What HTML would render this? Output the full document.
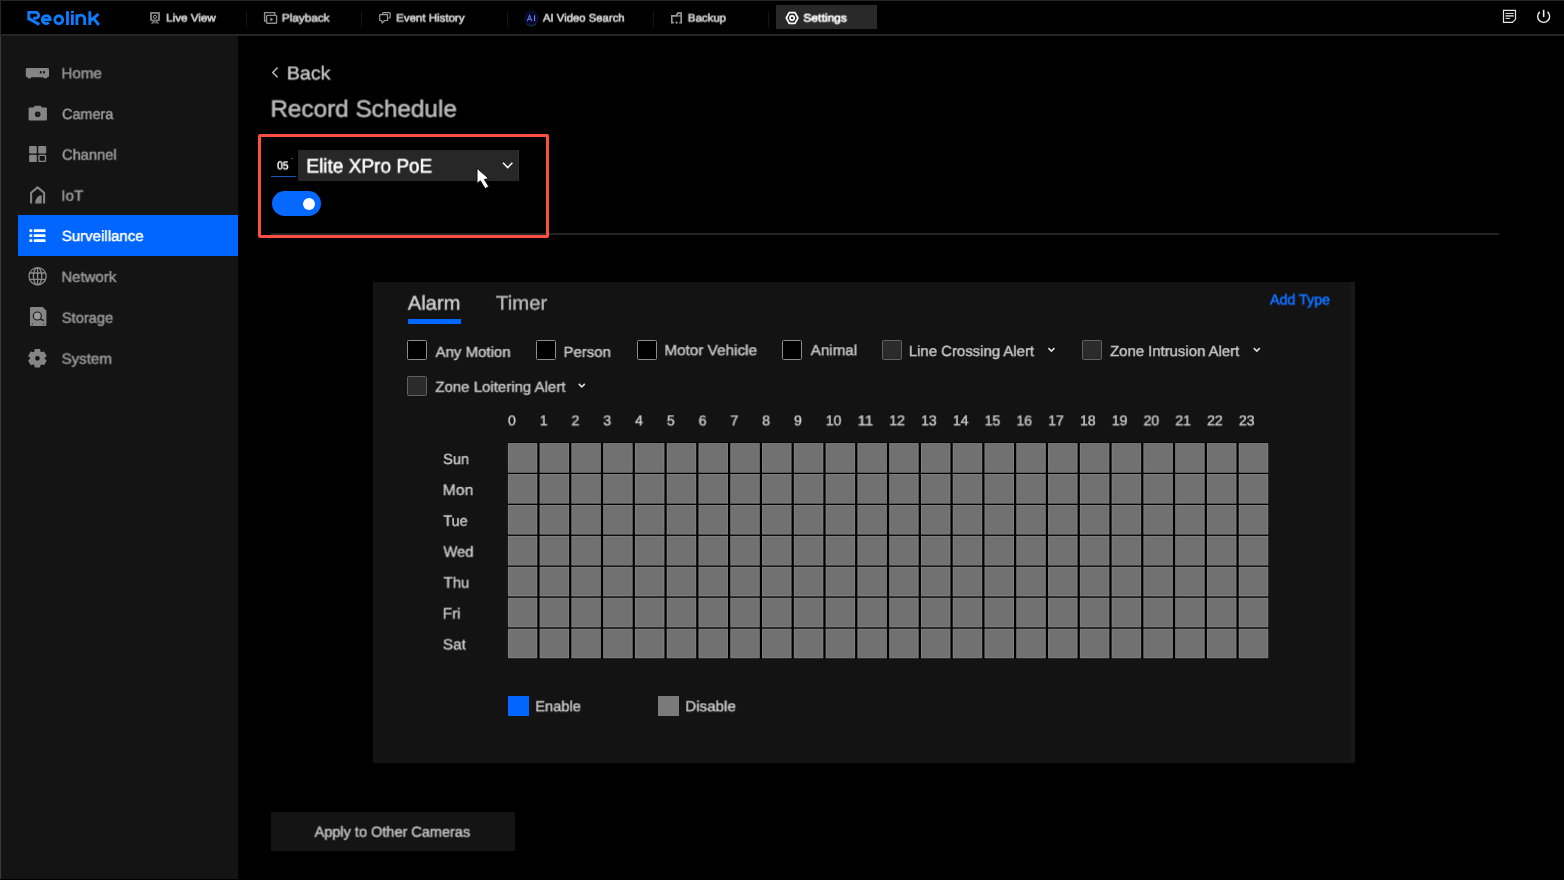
<!DOCTYPE html>
<html>
<head>
<meta charset="utf-8">
<title>Record Schedule</title>
<style>
*{box-sizing:border-box;margin:0;padding:0}
html,body{width:1564px;height:881px;overflow:hidden;background:#000}
body{font-family:"Liberation Sans",sans-serif;color:#c4c4c4;position:relative}
.abs{position:absolute}
.t{position:absolute;left:0;top:0;white-space:nowrap;line-height:1;transform-origin:0 0;will-change:transform;text-rendering:geometricPrecision}
svg{position:absolute;overflow:visible}
/* frame */
#topline{left:0;top:0;width:1564px;height:1px;background:#262626}
#leftline{left:0;top:0;width:1px;height:36px;background:#272727}
#leftline2{left:0;top:36px;width:1.1px;height:843px;background:#3a3a3a}
#botblack{left:0;top:878.8px;width:1564px;height:1px;background:#000}
#botwhite{left:0;top:879.7px;width:1564px;height:1.3px;background:#fff}
#hdrline{left:0;top:34px;width:1564px;height:2px;background:#262626}
#sidebar{left:1px;top:36px;width:237px;height:845px;background:#141414}
.sep{position:absolute;top:11px;width:1px;height:16px;background:#161616}
#active{left:18px;top:215px;width:220px;height:41px;background:#0066ff}
#panel{left:373.2px;top:282.2px;width:982.1px;height:480.9px;background:#131313}
.cb{position:absolute;width:20px;height:20px;border:1.2px solid #8c8c8c;border-radius:1.5px;background:#000}
.cb.d{border-color:#606060;background:#2b2b2b}
</style>
</head>
<body>
<div class="abs" id="sidebar"></div>
<div class="abs" id="topline"></div>
<div class="abs" id="leftline"></div>
<div class="abs" id="leftline2"></div>
<div class="abs" id="botblack"></div>
<div class="abs" id="botwhite"></div>
<div class="abs" id="hdrline"></div>

<!-- top navigation -->
<div class="sep" style="left:246px"></div>
<div class="sep" style="left:361px"></div>
<div class="sep" style="left:507px"></div>
<div class="sep" style="left:653px"></div>
<div class="sep" style="left:768px"></div>
<div class="abs" style="left:776px;top:5px;width:101px;height:24px;background:#292929"></div>
<svg style="left:0;top:0" width="1564" height="36" viewBox="0 0 1564 36">
 <!-- logo -->
 <g fill="none" stroke="#0d7cff" stroke-width="2.85" stroke-linejoin="miter">
  <path d="M28.8 19.6V12.3H35.7a2.95 2.95 0 0 1 0 5.9H33.2"/>
  <path d="M27.9 18.2L39.3 24.5" stroke-width="3.1"/>
  <path d="M42.6 19.6H50.2a3.95 3.95 0 1 0 -1.3 2.95"/>
  <circle cx="58.8" cy="19.7" r="3.95"/>
  <path d="M67.5 11.2V25"/>
  <path d="M72.4 14.2V25M72.4 10.9V12.9"/>
  <path d="M76.9 25V14.2M76.9 19a3.9 3.9 0 0 1 7.8 0V25"/>
  <path d="M89.8 11.2V25M98.4 14.2L90.4 20.6M93.6 18.4L98.8 25"/>
 </g>
 <!-- live view -->
 <g>
  <rect x="150" y="12.1" width="10" height="9" rx="1" fill="#7e7e7e"/>
  <rect x="152.1" y="13.9" width="5.8" height="5.7" fill="#000"/>
  <circle cx="155" cy="16.9" r="1.55" fill="none" stroke="#a0a0a0" stroke-width="1"/>
  <path d="M153.4 21L151.6 23.6H158.4L156.6 21Z" fill="#555"/>
  <path d="M153.4 21L151.6 23.6M156.6 21L158.4 23.6" fill="none" stroke="#858585" stroke-width="1.1"/>
 </g>
 <!-- playback -->
 <g fill="none" stroke="#8e8e8e" stroke-width="1.4">
  <path d="M266.6 21H264.6V12.6H274.7V14.8"/>
  <rect x="266.6" y="15.4" width="10" height="7.9" rx="0.8"/>
  <path d="M270.4 17.4L273.2 19.4L270.4 21.3Z" fill="#a0a0a0" stroke="none"/>
 </g>
 <!-- event history -->
 <g fill="none" stroke="#9a9a9a" stroke-width="1.2" stroke-linejoin="round">
  <path d="M382.6 14V13.6a1 1 0 0 1 1-1H389.2a1 1 0 0 1 1 1V17a1 1 0 0 1 -1 1H388.2"/>
  <path d="M379.7 14.6H387.5V20.5H384.6L382.2 23.2L381.6 20.5H379.7Z"/>
 </g>
 <!-- AI -->
 <circle cx="531.4" cy="18.2" r="6.7" fill="#06062a" stroke="#0f1642" stroke-width="1"/>
 <path d="M526.6 24a6.9 6.9 0 0 0 9.6 0" fill="none" stroke="#153a4e" stroke-width="1"/>
 <g fill="none" stroke="#5c6ed6" stroke-width="1.15">
  <path d="M527.2 21.2L529.6 15.2L532 21.2M528 19.4H531.2"/>
  <path d="M534.6 15.2V21.2" stroke="#6d88ea"/>
 </g>
 <!-- backup -->
 <g fill="none" stroke="#999" stroke-width="1.6">
  <path d="M673.8 22.6H671.8V15.9H676.4L677.8 13.1H681.2V22.6H679.4"/>
  <path d="M676.4 15.9H681.2" stroke-width="1.2"/>
  <rect x="675.6" y="21.7" width="1.8" height="1.8" fill="#bbb" stroke="none"/>
 </g>
 <!-- settings -->
 <g fill="none" stroke="#fff" stroke-width="1.7" stroke-linejoin="round">
  <path d="M786.3 18L789.2 12.7H795L797.9 18L795 23.3H789.2Z"/>
  <circle cx="792.1" cy="18" r="2.1"/>
 </g>
 <!-- note icon -->
 <g fill="none" stroke="#e6e6e6" stroke-width="1.1">
  <path d="M1503.5 10.35H1515.5V19.3L1512.4 22.4H1503.5Z" stroke-width="1.2"/>
  <path d="M1505.4 13.4H1513.8M1505.4 18.4H1510" stroke-width="1"/><path d="M1505.4 15.9H1513.8" stroke-width="1.5" stroke="#cfcfcf"/>
 </g>
 <!-- power -->
 <g fill="none" stroke="#f0f0f0" stroke-width="1.4">
  <path d="M1539.75 11.85a6 6 0 1 0 7.8 0"/>
  <path d="M1543.65 9.9V17" stroke-width="1.6"/>
 </g>
</svg>

<!-- sidebar -->
<div class="abs" id="active"></div>
<svg style="left:0;top:36px" width="240" height="360" viewBox="0 36 240 360">
 <g fill="#858585">
  <!-- home / nvr -->
  <rect x="25.8" y="68.1" width="23.2" height="9.1" rx="1.4"/>
  <rect x="27.6" y="76.8" width="3.4" height="1.5"/><rect x="43.6" y="76.8" width="3.4" height="1.5"/>
  <rect x="39.8" y="71.1" width="1.9" height="2.3" fill="#141414"/><rect x="43" y="71.1" width="1.9" height="2.3" fill="#141414"/>
  <!-- camera -->
  <path d="M29.6 107.5H33.4L34.8 105.8H40.6L42 107.5H45.9a1 1 0 0 1 1 1V119.6a1 1 0 0 1 -1 1H29.6a1 1 0 0 1 -1-1V108.5a1 1 0 0 1 1-1Z"/>
  <circle cx="37.7" cy="114.3" r="2.8" fill="#161616"/>
  <circle cx="37.7" cy="114.3" r="1.2" fill="#2c2c2c"/>
  <!-- channel -->
  <rect x="29.1" y="146" width="7.7" height="7.4" rx="1.2"/>
  <rect x="38.2" y="146" width="8" height="7.4" rx="1.2"/>
  <rect x="29.1" y="154.7" width="7.7" height="7.4" rx="1.2"/>
  <rect x="38.9" y="155.4" width="6.6" height="6" rx="0.8" fill="none" stroke="#8a8a8a" stroke-width="1.4"/>
  <!-- iot -->
  <path d="M31.1 203.6V192.8L37.6 187.4L44.1 192.8V203.6" fill="none" stroke="#858585" stroke-width="2.1" stroke-linejoin="round"/>
  <path d="M35 203.6A6.7 8.4 0 0 1 41.7 195.2V203.6Z"/>
  <!-- storage -->
  <path d="M31.2 307H42.6L46.4 310.6V324.9a1.2 1.2 0 0 1 -1.2 1.2H31.2a1.2 1.2 0 0 1 -1.2-1.2V308.2a1.2 1.2 0 0 1 1.2-1.2Z"/>
  <circle cx="37.3" cy="316" r="4" fill="#999" stroke="#1c1c1c" stroke-width="1.2"/>
  <path d="M40.4 319L43.8 320.6" stroke="#1c1c1c" stroke-width="1.4" fill="none"/>
  <rect x="31.9" y="323.4" width="1" height="1.4" fill="#333"/><rect x="43.4" y="323.4" width="1" height="1.4" fill="#333"/>
  <!-- system gear -->
  <path d="M35.07 352.12L35.36 349.95L39.44 349.95L39.73 352.12L41.59 353.20L43.61 352.35L45.66 355.89L43.91 357.23L43.91 359.37L45.66 360.71L43.61 364.25L41.59 363.40L39.73 364.48L39.44 366.65L35.36 366.65L35.07 364.48L33.21 363.40L31.19 364.25L29.14 360.71L30.89 359.37L30.89 357.23L29.14 355.89L31.19 352.35L33.21 353.20ZM40.60 358.30a3.2 3.2 0 1 0 -6.4 0a3.2 3.2 0 1 0 6.4 0Z" fill-rule="evenodd" stroke="#858585" stroke-width="1.7" stroke-linejoin="round"/>
 </g>
 <!-- surveillance -->
 <g fill="#fff">
  <rect x="29.4" y="229.3" width="3" height="2.7" rx="1"/><rect x="33.8" y="229.3" width="11.7" height="2.7" rx="0.6"/>
  <rect x="29.4" y="234.3" width="3" height="2.7" rx="1"/><rect x="33.8" y="234.3" width="11.7" height="2.7" rx="0.6"/>
  <rect x="29.4" y="239.3" width="3" height="2.7" rx="1"/><rect x="33.8" y="239.3" width="11.7" height="2.7" rx="0.6"/>
 </g>
 <!-- network -->
 <g fill="none" stroke="#8a8a8a" stroke-width="1.3">
  <circle cx="37.6" cy="276.2" r="8.6"/>
  <ellipse cx="37.6" cy="276.2" rx="4.2" ry="8.6"/>
  <path d="M37.6 267.6V284.8M29.8 273H45.4M29.8 279.4H45.4"/>
 </g>
</svg>

<!-- header: back, title, camera select, toggle -->
<div class="abs" style="left:271px;top:233px;width:1228px;height:2px;background:#232323"></div>
<div class="abs" style="left:298px;top:150px;width:221px;height:31px;background:#272727"></div>
<div class="abs" style="left:517.8px;top:150px;width:1.2px;height:31px;background:#323232"></div>
<div class="abs" style="left:271.4px;top:175.9px;width:24.5px;height:0.9px;background:#1857b4"></div>
<div class="abs" style="left:290.8px;top:157.5px;width:2px;height:1px;background:#184f9c"></div>
<div class="abs" style="left:272px;top:191px;width:49px;height:25px;border-radius:12.5px;background:#0568ff"></div>
<div class="abs" style="left:302.8px;top:197.9px;width:12px;height:12px;border-radius:50%;background:#fff"></div>
<div class="abs" style="left:258px;top:133.9px;width:291.1px;height:104.2px;border:3.1px solid #fb4f42;border-radius:2px"></div>
<svg style="left:0;top:36px" width="600" height="210" viewBox="0 36 600 210">
 <path d="M277.6 67.5L272.7 72.4L277.6 77.3" fill="none" stroke="#c2c2c2" stroke-width="1.35"/>
 <path d="M503 162.8L507.7 167.6L512.4 162.8" fill="none" stroke="#fff" stroke-width="1.5"/>
 <!-- mouse cursor -->
 <path d="M477 168.2V183.4L480.3 180.8L485.2 188.7L488.8 186.5L484.4 179.5L488.8 178.6Z" fill="#fff" stroke="#0c0c0c" stroke-width="1" stroke-linejoin="round"/>
</svg>

<!-- schedule panel -->
<div class="abs" id="panel"></div>
<div class="abs" style="left:1349.8px;top:282.2px;width:5.5px;height:480.9px;background:#171717"></div>
<div class="abs" style="left:407.5px;top:318.8px;width:53.5px;height:5.6px;background:#0068ff"></div>
<div class="cb" style="left:407.2px;top:340.4px"></div>
<div class="cb" style="left:536.2px;top:340.4px"></div>
<div class="cb" style="left:637px;top:340.4px"></div>
<div class="cb" style="left:782.2px;top:340.4px"></div>
<div class="cb d" style="left:881.6px;top:340.4px"></div>
<div class="cb d" style="left:1082px;top:340.4px"></div>
<div class="cb d" style="left:407.2px;top:376.2px"></div>
<svg style="left:373px;top:282px" width="982" height="481" viewBox="373 282 982 481">
 <g fill="none" stroke="#e0e0e0" stroke-width="1.5">
  <path d="M1048.4 348.1L1051.4 351.1L1054.4 348.1"/>
  <path d="M1253.8 348.1L1256.8 351.1L1259.8 348.1"/>
  <path d="M578.8 383.9L581.8 386.9L584.8 383.9"/>
 </g>
</svg>
<svg style="left:0;top:0" width="1564" height="881" viewBox="0 0 1564 881"><rect x="507.1" y="442.4" width="761.1" height="216.2" fill="#000"/><rect x="507.80" y="443.10" width="29.5" height="29.6" fill="#818181"/><rect x="508.80" y="444.10" width="27.5" height="27.6" fill="#717171"/><rect x="539.58" y="443.10" width="29.5" height="29.6" fill="#818181"/><rect x="540.58" y="444.10" width="27.5" height="27.6" fill="#717171"/><rect x="571.36" y="443.10" width="29.5" height="29.6" fill="#818181"/><rect x="572.36" y="444.10" width="27.5" height="27.6" fill="#717171"/><rect x="603.14" y="443.10" width="29.5" height="29.6" fill="#818181"/><rect x="604.14" y="444.10" width="27.5" height="27.6" fill="#717171"/><rect x="634.92" y="443.10" width="29.5" height="29.6" fill="#818181"/><rect x="635.92" y="444.10" width="27.5" height="27.6" fill="#717171"/><rect x="666.70" y="443.10" width="29.5" height="29.6" fill="#818181"/><rect x="667.70" y="444.10" width="27.5" height="27.6" fill="#717171"/><rect x="698.48" y="443.10" width="29.5" height="29.6" fill="#818181"/><rect x="699.48" y="444.10" width="27.5" height="27.6" fill="#717171"/><rect x="730.26" y="443.10" width="29.5" height="29.6" fill="#818181"/><rect x="731.26" y="444.10" width="27.5" height="27.6" fill="#717171"/><rect x="762.04" y="443.10" width="29.5" height="29.6" fill="#818181"/><rect x="763.04" y="444.10" width="27.5" height="27.6" fill="#717171"/><rect x="793.82" y="443.10" width="29.5" height="29.6" fill="#818181"/><rect x="794.82" y="444.10" width="27.5" height="27.6" fill="#717171"/><rect x="825.60" y="443.10" width="29.5" height="29.6" fill="#818181"/><rect x="826.60" y="444.10" width="27.5" height="27.6" fill="#717171"/><rect x="857.38" y="443.10" width="29.5" height="29.6" fill="#818181"/><rect x="858.38" y="444.10" width="27.5" height="27.6" fill="#717171"/><rect x="889.16" y="443.10" width="29.5" height="29.6" fill="#818181"/><rect x="890.16" y="444.10" width="27.5" height="27.6" fill="#717171"/><rect x="920.94" y="443.10" width="29.5" height="29.6" fill="#818181"/><rect x="921.94" y="444.10" width="27.5" height="27.6" fill="#717171"/><rect x="952.72" y="443.10" width="29.5" height="29.6" fill="#818181"/><rect x="953.72" y="444.10" width="27.5" height="27.6" fill="#717171"/><rect x="984.50" y="443.10" width="29.5" height="29.6" fill="#818181"/><rect x="985.50" y="444.10" width="27.5" height="27.6" fill="#717171"/><rect x="1016.28" y="443.10" width="29.5" height="29.6" fill="#818181"/><rect x="1017.28" y="444.10" width="27.5" height="27.6" fill="#717171"/><rect x="1048.06" y="443.10" width="29.5" height="29.6" fill="#818181"/><rect x="1049.06" y="444.10" width="27.5" height="27.6" fill="#717171"/><rect x="1079.84" y="443.10" width="29.5" height="29.6" fill="#818181"/><rect x="1080.84" y="444.10" width="27.5" height="27.6" fill="#717171"/><rect x="1111.62" y="443.10" width="29.5" height="29.6" fill="#818181"/><rect x="1112.62" y="444.10" width="27.5" height="27.6" fill="#717171"/><rect x="1143.40" y="443.10" width="29.5" height="29.6" fill="#818181"/><rect x="1144.40" y="444.10" width="27.5" height="27.6" fill="#717171"/><rect x="1175.18" y="443.10" width="29.5" height="29.6" fill="#818181"/><rect x="1176.18" y="444.10" width="27.5" height="27.6" fill="#717171"/><rect x="1206.96" y="443.10" width="29.5" height="29.6" fill="#818181"/><rect x="1207.96" y="444.10" width="27.5" height="27.6" fill="#717171"/><rect x="1238.74" y="443.10" width="29.5" height="29.6" fill="#818181"/><rect x="1239.74" y="444.10" width="27.5" height="27.6" fill="#717171"/><rect x="507.80" y="474.03" width="29.5" height="29.6" fill="#818181"/><rect x="508.80" y="475.03" width="27.5" height="27.6" fill="#717171"/><rect x="539.58" y="474.03" width="29.5" height="29.6" fill="#818181"/><rect x="540.58" y="475.03" width="27.5" height="27.6" fill="#717171"/><rect x="571.36" y="474.03" width="29.5" height="29.6" fill="#818181"/><rect x="572.36" y="475.03" width="27.5" height="27.6" fill="#717171"/><rect x="603.14" y="474.03" width="29.5" height="29.6" fill="#818181"/><rect x="604.14" y="475.03" width="27.5" height="27.6" fill="#717171"/><rect x="634.92" y="474.03" width="29.5" height="29.6" fill="#818181"/><rect x="635.92" y="475.03" width="27.5" height="27.6" fill="#717171"/><rect x="666.70" y="474.03" width="29.5" height="29.6" fill="#818181"/><rect x="667.70" y="475.03" width="27.5" height="27.6" fill="#717171"/><rect x="698.48" y="474.03" width="29.5" height="29.6" fill="#818181"/><rect x="699.48" y="475.03" width="27.5" height="27.6" fill="#717171"/><rect x="730.26" y="474.03" width="29.5" height="29.6" fill="#818181"/><rect x="731.26" y="475.03" width="27.5" height="27.6" fill="#717171"/><rect x="762.04" y="474.03" width="29.5" height="29.6" fill="#818181"/><rect x="763.04" y="475.03" width="27.5" height="27.6" fill="#717171"/><rect x="793.82" y="474.03" width="29.5" height="29.6" fill="#818181"/><rect x="794.82" y="475.03" width="27.5" height="27.6" fill="#717171"/><rect x="825.60" y="474.03" width="29.5" height="29.6" fill="#818181"/><rect x="826.60" y="475.03" width="27.5" height="27.6" fill="#717171"/><rect x="857.38" y="474.03" width="29.5" height="29.6" fill="#818181"/><rect x="858.38" y="475.03" width="27.5" height="27.6" fill="#717171"/><rect x="889.16" y="474.03" width="29.5" height="29.6" fill="#818181"/><rect x="890.16" y="475.03" width="27.5" height="27.6" fill="#717171"/><rect x="920.94" y="474.03" width="29.5" height="29.6" fill="#818181"/><rect x="921.94" y="475.03" width="27.5" height="27.6" fill="#717171"/><rect x="952.72" y="474.03" width="29.5" height="29.6" fill="#818181"/><rect x="953.72" y="475.03" width="27.5" height="27.6" fill="#717171"/><rect x="984.50" y="474.03" width="29.5" height="29.6" fill="#818181"/><rect x="985.50" y="475.03" width="27.5" height="27.6" fill="#717171"/><rect x="1016.28" y="474.03" width="29.5" height="29.6" fill="#818181"/><rect x="1017.28" y="475.03" width="27.5" height="27.6" fill="#717171"/><rect x="1048.06" y="474.03" width="29.5" height="29.6" fill="#818181"/><rect x="1049.06" y="475.03" width="27.5" height="27.6" fill="#717171"/><rect x="1079.84" y="474.03" width="29.5" height="29.6" fill="#818181"/><rect x="1080.84" y="475.03" width="27.5" height="27.6" fill="#717171"/><rect x="1111.62" y="474.03" width="29.5" height="29.6" fill="#818181"/><rect x="1112.62" y="475.03" width="27.5" height="27.6" fill="#717171"/><rect x="1143.40" y="474.03" width="29.5" height="29.6" fill="#818181"/><rect x="1144.40" y="475.03" width="27.5" height="27.6" fill="#717171"/><rect x="1175.18" y="474.03" width="29.5" height="29.6" fill="#818181"/><rect x="1176.18" y="475.03" width="27.5" height="27.6" fill="#717171"/><rect x="1206.96" y="474.03" width="29.5" height="29.6" fill="#818181"/><rect x="1207.96" y="475.03" width="27.5" height="27.6" fill="#717171"/><rect x="1238.74" y="474.03" width="29.5" height="29.6" fill="#818181"/><rect x="1239.74" y="475.03" width="27.5" height="27.6" fill="#717171"/><rect x="507.80" y="504.96" width="29.5" height="29.6" fill="#818181"/><rect x="508.80" y="505.96" width="27.5" height="27.6" fill="#717171"/><rect x="539.58" y="504.96" width="29.5" height="29.6" fill="#818181"/><rect x="540.58" y="505.96" width="27.5" height="27.6" fill="#717171"/><rect x="571.36" y="504.96" width="29.5" height="29.6" fill="#818181"/><rect x="572.36" y="505.96" width="27.5" height="27.6" fill="#717171"/><rect x="603.14" y="504.96" width="29.5" height="29.6" fill="#818181"/><rect x="604.14" y="505.96" width="27.5" height="27.6" fill="#717171"/><rect x="634.92" y="504.96" width="29.5" height="29.6" fill="#818181"/><rect x="635.92" y="505.96" width="27.5" height="27.6" fill="#717171"/><rect x="666.70" y="504.96" width="29.5" height="29.6" fill="#818181"/><rect x="667.70" y="505.96" width="27.5" height="27.6" fill="#717171"/><rect x="698.48" y="504.96" width="29.5" height="29.6" fill="#818181"/><rect x="699.48" y="505.96" width="27.5" height="27.6" fill="#717171"/><rect x="730.26" y="504.96" width="29.5" height="29.6" fill="#818181"/><rect x="731.26" y="505.96" width="27.5" height="27.6" fill="#717171"/><rect x="762.04" y="504.96" width="29.5" height="29.6" fill="#818181"/><rect x="763.04" y="505.96" width="27.5" height="27.6" fill="#717171"/><rect x="793.82" y="504.96" width="29.5" height="29.6" fill="#818181"/><rect x="794.82" y="505.96" width="27.5" height="27.6" fill="#717171"/><rect x="825.60" y="504.96" width="29.5" height="29.6" fill="#818181"/><rect x="826.60" y="505.96" width="27.5" height="27.6" fill="#717171"/><rect x="857.38" y="504.96" width="29.5" height="29.6" fill="#818181"/><rect x="858.38" y="505.96" width="27.5" height="27.6" fill="#717171"/><rect x="889.16" y="504.96" width="29.5" height="29.6" fill="#818181"/><rect x="890.16" y="505.96" width="27.5" height="27.6" fill="#717171"/><rect x="920.94" y="504.96" width="29.5" height="29.6" fill="#818181"/><rect x="921.94" y="505.96" width="27.5" height="27.6" fill="#717171"/><rect x="952.72" y="504.96" width="29.5" height="29.6" fill="#818181"/><rect x="953.72" y="505.96" width="27.5" height="27.6" fill="#717171"/><rect x="984.50" y="504.96" width="29.5" height="29.6" fill="#818181"/><rect x="985.50" y="505.96" width="27.5" height="27.6" fill="#717171"/><rect x="1016.28" y="504.96" width="29.5" height="29.6" fill="#818181"/><rect x="1017.28" y="505.96" width="27.5" height="27.6" fill="#717171"/><rect x="1048.06" y="504.96" width="29.5" height="29.6" fill="#818181"/><rect x="1049.06" y="505.96" width="27.5" height="27.6" fill="#717171"/><rect x="1079.84" y="504.96" width="29.5" height="29.6" fill="#818181"/><rect x="1080.84" y="505.96" width="27.5" height="27.6" fill="#717171"/><rect x="1111.62" y="504.96" width="29.5" height="29.6" fill="#818181"/><rect x="1112.62" y="505.96" width="27.5" height="27.6" fill="#717171"/><rect x="1143.40" y="504.96" width="29.5" height="29.6" fill="#818181"/><rect x="1144.40" y="505.96" width="27.5" height="27.6" fill="#717171"/><rect x="1175.18" y="504.96" width="29.5" height="29.6" fill="#818181"/><rect x="1176.18" y="505.96" width="27.5" height="27.6" fill="#717171"/><rect x="1206.96" y="504.96" width="29.5" height="29.6" fill="#818181"/><rect x="1207.96" y="505.96" width="27.5" height="27.6" fill="#717171"/><rect x="1238.74" y="504.96" width="29.5" height="29.6" fill="#818181"/><rect x="1239.74" y="505.96" width="27.5" height="27.6" fill="#717171"/><rect x="507.80" y="535.89" width="29.5" height="29.6" fill="#818181"/><rect x="508.80" y="536.89" width="27.5" height="27.6" fill="#717171"/><rect x="539.58" y="535.89" width="29.5" height="29.6" fill="#818181"/><rect x="540.58" y="536.89" width="27.5" height="27.6" fill="#717171"/><rect x="571.36" y="535.89" width="29.5" height="29.6" fill="#818181"/><rect x="572.36" y="536.89" width="27.5" height="27.6" fill="#717171"/><rect x="603.14" y="535.89" width="29.5" height="29.6" fill="#818181"/><rect x="604.14" y="536.89" width="27.5" height="27.6" fill="#717171"/><rect x="634.92" y="535.89" width="29.5" height="29.6" fill="#818181"/><rect x="635.92" y="536.89" width="27.5" height="27.6" fill="#717171"/><rect x="666.70" y="535.89" width="29.5" height="29.6" fill="#818181"/><rect x="667.70" y="536.89" width="27.5" height="27.6" fill="#717171"/><rect x="698.48" y="535.89" width="29.5" height="29.6" fill="#818181"/><rect x="699.48" y="536.89" width="27.5" height="27.6" fill="#717171"/><rect x="730.26" y="535.89" width="29.5" height="29.6" fill="#818181"/><rect x="731.26" y="536.89" width="27.5" height="27.6" fill="#717171"/><rect x="762.04" y="535.89" width="29.5" height="29.6" fill="#818181"/><rect x="763.04" y="536.89" width="27.5" height="27.6" fill="#717171"/><rect x="793.82" y="535.89" width="29.5" height="29.6" fill="#818181"/><rect x="794.82" y="536.89" width="27.5" height="27.6" fill="#717171"/><rect x="825.60" y="535.89" width="29.5" height="29.6" fill="#818181"/><rect x="826.60" y="536.89" width="27.5" height="27.6" fill="#717171"/><rect x="857.38" y="535.89" width="29.5" height="29.6" fill="#818181"/><rect x="858.38" y="536.89" width="27.5" height="27.6" fill="#717171"/><rect x="889.16" y="535.89" width="29.5" height="29.6" fill="#818181"/><rect x="890.16" y="536.89" width="27.5" height="27.6" fill="#717171"/><rect x="920.94" y="535.89" width="29.5" height="29.6" fill="#818181"/><rect x="921.94" y="536.89" width="27.5" height="27.6" fill="#717171"/><rect x="952.72" y="535.89" width="29.5" height="29.6" fill="#818181"/><rect x="953.72" y="536.89" width="27.5" height="27.6" fill="#717171"/><rect x="984.50" y="535.89" width="29.5" height="29.6" fill="#818181"/><rect x="985.50" y="536.89" width="27.5" height="27.6" fill="#717171"/><rect x="1016.28" y="535.89" width="29.5" height="29.6" fill="#818181"/><rect x="1017.28" y="536.89" width="27.5" height="27.6" fill="#717171"/><rect x="1048.06" y="535.89" width="29.5" height="29.6" fill="#818181"/><rect x="1049.06" y="536.89" width="27.5" height="27.6" fill="#717171"/><rect x="1079.84" y="535.89" width="29.5" height="29.6" fill="#818181"/><rect x="1080.84" y="536.89" width="27.5" height="27.6" fill="#717171"/><rect x="1111.62" y="535.89" width="29.5" height="29.6" fill="#818181"/><rect x="1112.62" y="536.89" width="27.5" height="27.6" fill="#717171"/><rect x="1143.40" y="535.89" width="29.5" height="29.6" fill="#818181"/><rect x="1144.40" y="536.89" width="27.5" height="27.6" fill="#717171"/><rect x="1175.18" y="535.89" width="29.5" height="29.6" fill="#818181"/><rect x="1176.18" y="536.89" width="27.5" height="27.6" fill="#717171"/><rect x="1206.96" y="535.89" width="29.5" height="29.6" fill="#818181"/><rect x="1207.96" y="536.89" width="27.5" height="27.6" fill="#717171"/><rect x="1238.74" y="535.89" width="29.5" height="29.6" fill="#818181"/><rect x="1239.74" y="536.89" width="27.5" height="27.6" fill="#717171"/><rect x="507.80" y="566.82" width="29.5" height="29.6" fill="#818181"/><rect x="508.80" y="567.82" width="27.5" height="27.6" fill="#717171"/><rect x="539.58" y="566.82" width="29.5" height="29.6" fill="#818181"/><rect x="540.58" y="567.82" width="27.5" height="27.6" fill="#717171"/><rect x="571.36" y="566.82" width="29.5" height="29.6" fill="#818181"/><rect x="572.36" y="567.82" width="27.5" height="27.6" fill="#717171"/><rect x="603.14" y="566.82" width="29.5" height="29.6" fill="#818181"/><rect x="604.14" y="567.82" width="27.5" height="27.6" fill="#717171"/><rect x="634.92" y="566.82" width="29.5" height="29.6" fill="#818181"/><rect x="635.92" y="567.82" width="27.5" height="27.6" fill="#717171"/><rect x="666.70" y="566.82" width="29.5" height="29.6" fill="#818181"/><rect x="667.70" y="567.82" width="27.5" height="27.6" fill="#717171"/><rect x="698.48" y="566.82" width="29.5" height="29.6" fill="#818181"/><rect x="699.48" y="567.82" width="27.5" height="27.6" fill="#717171"/><rect x="730.26" y="566.82" width="29.5" height="29.6" fill="#818181"/><rect x="731.26" y="567.82" width="27.5" height="27.6" fill="#717171"/><rect x="762.04" y="566.82" width="29.5" height="29.6" fill="#818181"/><rect x="763.04" y="567.82" width="27.5" height="27.6" fill="#717171"/><rect x="793.82" y="566.82" width="29.5" height="29.6" fill="#818181"/><rect x="794.82" y="567.82" width="27.5" height="27.6" fill="#717171"/><rect x="825.60" y="566.82" width="29.5" height="29.6" fill="#818181"/><rect x="826.60" y="567.82" width="27.5" height="27.6" fill="#717171"/><rect x="857.38" y="566.82" width="29.5" height="29.6" fill="#818181"/><rect x="858.38" y="567.82" width="27.5" height="27.6" fill="#717171"/><rect x="889.16" y="566.82" width="29.5" height="29.6" fill="#818181"/><rect x="890.16" y="567.82" width="27.5" height="27.6" fill="#717171"/><rect x="920.94" y="566.82" width="29.5" height="29.6" fill="#818181"/><rect x="921.94" y="567.82" width="27.5" height="27.6" fill="#717171"/><rect x="952.72" y="566.82" width="29.5" height="29.6" fill="#818181"/><rect x="953.72" y="567.82" width="27.5" height="27.6" fill="#717171"/><rect x="984.50" y="566.82" width="29.5" height="29.6" fill="#818181"/><rect x="985.50" y="567.82" width="27.5" height="27.6" fill="#717171"/><rect x="1016.28" y="566.82" width="29.5" height="29.6" fill="#818181"/><rect x="1017.28" y="567.82" width="27.5" height="27.6" fill="#717171"/><rect x="1048.06" y="566.82" width="29.5" height="29.6" fill="#818181"/><rect x="1049.06" y="567.82" width="27.5" height="27.6" fill="#717171"/><rect x="1079.84" y="566.82" width="29.5" height="29.6" fill="#818181"/><rect x="1080.84" y="567.82" width="27.5" height="27.6" fill="#717171"/><rect x="1111.62" y="566.82" width="29.5" height="29.6" fill="#818181"/><rect x="1112.62" y="567.82" width="27.5" height="27.6" fill="#717171"/><rect x="1143.40" y="566.82" width="29.5" height="29.6" fill="#818181"/><rect x="1144.40" y="567.82" width="27.5" height="27.6" fill="#717171"/><rect x="1175.18" y="566.82" width="29.5" height="29.6" fill="#818181"/><rect x="1176.18" y="567.82" width="27.5" height="27.6" fill="#717171"/><rect x="1206.96" y="566.82" width="29.5" height="29.6" fill="#818181"/><rect x="1207.96" y="567.82" width="27.5" height="27.6" fill="#717171"/><rect x="1238.74" y="566.82" width="29.5" height="29.6" fill="#818181"/><rect x="1239.74" y="567.82" width="27.5" height="27.6" fill="#717171"/><rect x="507.80" y="597.75" width="29.5" height="29.6" fill="#818181"/><rect x="508.80" y="598.75" width="27.5" height="27.6" fill="#717171"/><rect x="539.58" y="597.75" width="29.5" height="29.6" fill="#818181"/><rect x="540.58" y="598.75" width="27.5" height="27.6" fill="#717171"/><rect x="571.36" y="597.75" width="29.5" height="29.6" fill="#818181"/><rect x="572.36" y="598.75" width="27.5" height="27.6" fill="#717171"/><rect x="603.14" y="597.75" width="29.5" height="29.6" fill="#818181"/><rect x="604.14" y="598.75" width="27.5" height="27.6" fill="#717171"/><rect x="634.92" y="597.75" width="29.5" height="29.6" fill="#818181"/><rect x="635.92" y="598.75" width="27.5" height="27.6" fill="#717171"/><rect x="666.70" y="597.75" width="29.5" height="29.6" fill="#818181"/><rect x="667.70" y="598.75" width="27.5" height="27.6" fill="#717171"/><rect x="698.48" y="597.75" width="29.5" height="29.6" fill="#818181"/><rect x="699.48" y="598.75" width="27.5" height="27.6" fill="#717171"/><rect x="730.26" y="597.75" width="29.5" height="29.6" fill="#818181"/><rect x="731.26" y="598.75" width="27.5" height="27.6" fill="#717171"/><rect x="762.04" y="597.75" width="29.5" height="29.6" fill="#818181"/><rect x="763.04" y="598.75" width="27.5" height="27.6" fill="#717171"/><rect x="793.82" y="597.75" width="29.5" height="29.6" fill="#818181"/><rect x="794.82" y="598.75" width="27.5" height="27.6" fill="#717171"/><rect x="825.60" y="597.75" width="29.5" height="29.6" fill="#818181"/><rect x="826.60" y="598.75" width="27.5" height="27.6" fill="#717171"/><rect x="857.38" y="597.75" width="29.5" height="29.6" fill="#818181"/><rect x="858.38" y="598.75" width="27.5" height="27.6" fill="#717171"/><rect x="889.16" y="597.75" width="29.5" height="29.6" fill="#818181"/><rect x="890.16" y="598.75" width="27.5" height="27.6" fill="#717171"/><rect x="920.94" y="597.75" width="29.5" height="29.6" fill="#818181"/><rect x="921.94" y="598.75" width="27.5" height="27.6" fill="#717171"/><rect x="952.72" y="597.75" width="29.5" height="29.6" fill="#818181"/><rect x="953.72" y="598.75" width="27.5" height="27.6" fill="#717171"/><rect x="984.50" y="597.75" width="29.5" height="29.6" fill="#818181"/><rect x="985.50" y="598.75" width="27.5" height="27.6" fill="#717171"/><rect x="1016.28" y="597.75" width="29.5" height="29.6" fill="#818181"/><rect x="1017.28" y="598.75" width="27.5" height="27.6" fill="#717171"/><rect x="1048.06" y="597.75" width="29.5" height="29.6" fill="#818181"/><rect x="1049.06" y="598.75" width="27.5" height="27.6" fill="#717171"/><rect x="1079.84" y="597.75" width="29.5" height="29.6" fill="#818181"/><rect x="1080.84" y="598.75" width="27.5" height="27.6" fill="#717171"/><rect x="1111.62" y="597.75" width="29.5" height="29.6" fill="#818181"/><rect x="1112.62" y="598.75" width="27.5" height="27.6" fill="#717171"/><rect x="1143.40" y="597.75" width="29.5" height="29.6" fill="#818181"/><rect x="1144.40" y="598.75" width="27.5" height="27.6" fill="#717171"/><rect x="1175.18" y="597.75" width="29.5" height="29.6" fill="#818181"/><rect x="1176.18" y="598.75" width="27.5" height="27.6" fill="#717171"/><rect x="1206.96" y="597.75" width="29.5" height="29.6" fill="#818181"/><rect x="1207.96" y="598.75" width="27.5" height="27.6" fill="#717171"/><rect x="1238.74" y="597.75" width="29.5" height="29.6" fill="#818181"/><rect x="1239.74" y="598.75" width="27.5" height="27.6" fill="#717171"/><rect x="507.80" y="628.68" width="29.5" height="29.6" fill="#818181"/><rect x="508.80" y="629.68" width="27.5" height="27.6" fill="#717171"/><rect x="539.58" y="628.68" width="29.5" height="29.6" fill="#818181"/><rect x="540.58" y="629.68" width="27.5" height="27.6" fill="#717171"/><rect x="571.36" y="628.68" width="29.5" height="29.6" fill="#818181"/><rect x="572.36" y="629.68" width="27.5" height="27.6" fill="#717171"/><rect x="603.14" y="628.68" width="29.5" height="29.6" fill="#818181"/><rect x="604.14" y="629.68" width="27.5" height="27.6" fill="#717171"/><rect x="634.92" y="628.68" width="29.5" height="29.6" fill="#818181"/><rect x="635.92" y="629.68" width="27.5" height="27.6" fill="#717171"/><rect x="666.70" y="628.68" width="29.5" height="29.6" fill="#818181"/><rect x="667.70" y="629.68" width="27.5" height="27.6" fill="#717171"/><rect x="698.48" y="628.68" width="29.5" height="29.6" fill="#818181"/><rect x="699.48" y="629.68" width="27.5" height="27.6" fill="#717171"/><rect x="730.26" y="628.68" width="29.5" height="29.6" fill="#818181"/><rect x="731.26" y="629.68" width="27.5" height="27.6" fill="#717171"/><rect x="762.04" y="628.68" width="29.5" height="29.6" fill="#818181"/><rect x="763.04" y="629.68" width="27.5" height="27.6" fill="#717171"/><rect x="793.82" y="628.68" width="29.5" height="29.6" fill="#818181"/><rect x="794.82" y="629.68" width="27.5" height="27.6" fill="#717171"/><rect x="825.60" y="628.68" width="29.5" height="29.6" fill="#818181"/><rect x="826.60" y="629.68" width="27.5" height="27.6" fill="#717171"/><rect x="857.38" y="628.68" width="29.5" height="29.6" fill="#818181"/><rect x="858.38" y="629.68" width="27.5" height="27.6" fill="#717171"/><rect x="889.16" y="628.68" width="29.5" height="29.6" fill="#818181"/><rect x="890.16" y="629.68" width="27.5" height="27.6" fill="#717171"/><rect x="920.94" y="628.68" width="29.5" height="29.6" fill="#818181"/><rect x="921.94" y="629.68" width="27.5" height="27.6" fill="#717171"/><rect x="952.72" y="628.68" width="29.5" height="29.6" fill="#818181"/><rect x="953.72" y="629.68" width="27.5" height="27.6" fill="#717171"/><rect x="984.50" y="628.68" width="29.5" height="29.6" fill="#818181"/><rect x="985.50" y="629.68" width="27.5" height="27.6" fill="#717171"/><rect x="1016.28" y="628.68" width="29.5" height="29.6" fill="#818181"/><rect x="1017.28" y="629.68" width="27.5" height="27.6" fill="#717171"/><rect x="1048.06" y="628.68" width="29.5" height="29.6" fill="#818181"/><rect x="1049.06" y="629.68" width="27.5" height="27.6" fill="#717171"/><rect x="1079.84" y="628.68" width="29.5" height="29.6" fill="#818181"/><rect x="1080.84" y="629.68" width="27.5" height="27.6" fill="#717171"/><rect x="1111.62" y="628.68" width="29.5" height="29.6" fill="#818181"/><rect x="1112.62" y="629.68" width="27.5" height="27.6" fill="#717171"/><rect x="1143.40" y="628.68" width="29.5" height="29.6" fill="#818181"/><rect x="1144.40" y="629.68" width="27.5" height="27.6" fill="#717171"/><rect x="1175.18" y="628.68" width="29.5" height="29.6" fill="#818181"/><rect x="1176.18" y="629.68" width="27.5" height="27.6" fill="#717171"/><rect x="1206.96" y="628.68" width="29.5" height="29.6" fill="#818181"/><rect x="1207.96" y="629.68" width="27.5" height="27.6" fill="#717171"/><rect x="1238.74" y="628.68" width="29.5" height="29.6" fill="#818181"/><rect x="1239.74" y="629.68" width="27.5" height="27.6" fill="#717171"/></svg>
<div class="abs" style="left:508.4px;top:696px;width:20.4px;height:20.4px;background:#0066ff"></div>
<div class="abs" style="left:658.4px;top:696px;width:20.4px;height:20.4px;background:#7a7a7a"></div>

<!-- apply button -->
<div class="abs" style="left:270.7px;top:811.7px;width:244.1px;height:38.9px;background:#141414"></div>

<span class="t" style="font-size:10.97px;color:#cecece;-webkit-text-stroke:0.65px #cecece;transform:translate(166.17px,13.57px) scale(1.0635,1.0000) rotate(0.01deg);">Live View</span>
<span class="t" style="font-size:10.97px;color:#cecece;-webkit-text-stroke:0.65px #cecece;transform:translate(281.85px,13.56px) scale(1.0697,1.0000) rotate(0.01deg);">Playback</span>
<span class="t" style="font-size:10.97px;color:#cecece;-webkit-text-stroke:0.65px #cecece;transform:translate(396.18px,13.58px) scale(1.0479,1.0000) rotate(0.01deg);">Event History</span>
<span class="t" style="font-size:10.97px;color:#cecece;-webkit-text-stroke:0.65px #cecece;transform:translate(542.98px,13.58px) scale(1.0317,1.0000) rotate(0.01deg);">AI Video Search</span>
<span class="t" style="font-size:10.97px;color:#cecece;-webkit-text-stroke:0.65px #cecece;transform:translate(687.86px,13.55px) scale(1.0440,1.0000) rotate(0.01deg);">Backup</span>
<span class="t" style="font-size:10.97px;color:#ffffff;-webkit-text-stroke:0.65px #ffffff;transform:translate(803.45px,13.56px) scale(1.0967,1.0000) rotate(0.01deg);">Settings</span>
<span class="t" style="font-size:14.75px;color:#9b9b9b;-webkit-text-stroke:0.45px #9b9b9b;transform:translate(61.40px,67.28px) scale(1.0296,1.0000) rotate(0.01deg);">Home</span>
<span class="t" style="font-size:14.75px;color:#9b9b9b;-webkit-text-stroke:0.45px #9b9b9b;transform:translate(62.06px,108.11px) scale(0.9769,1.0000) rotate(0.01deg);">Camera</span>
<span class="t" style="font-size:14.75px;color:#9b9b9b;-webkit-text-stroke:0.45px #9b9b9b;transform:translate(62.02px,148.70px) scale(0.9926,1.0000) rotate(0.01deg);">Channel</span>
<span class="t" style="font-size:14.75px;color:#9b9b9b;-webkit-text-stroke:0.45px #9b9b9b;transform:translate(61.30px,189.69px) scale(1.0388,1.0000) rotate(0.01deg);">IoT</span>
<span class="t" style="font-size:14.75px;color:#ffffff;-webkit-text-stroke:0.45px #ffffff;transform:translate(61.83px,230.00px) scale(1.0172,1.0000) rotate(0.01deg);">Surveillance</span>
<span class="t" style="font-size:14.75px;color:#9b9b9b;-webkit-text-stroke:0.45px #9b9b9b;transform:translate(61.38px,270.90px) scale(1.0154,1.0000) rotate(0.01deg);">Network</span>
<span class="t" style="font-size:14.75px;color:#9b9b9b;-webkit-text-stroke:0.45px #9b9b9b;transform:translate(61.79px,311.79px) scale(0.9941,1.0000) rotate(0.01deg);">Storage</span>
<span class="t" style="font-size:14.75px;color:#9b9b9b;-webkit-text-stroke:0.45px #9b9b9b;transform:translate(61.60px,352.69px) scale(1.0222,1.0000) rotate(0.01deg);">System</span>
<span class="t" style="font-size:18.53px;color:#c2c2c2;-webkit-text-stroke:0.45px #c2c2c2;transform:translate(286.86px,64.42px) scale(1.0556,1.0000) rotate(0.01deg);">Back</span>
<span class="t" style="font-size:23.40px;color:#b6b6b6;-webkit-text-stroke:0.6px #b6b6b6;transform:translate(270.39px,97.68px) scale(1.0394,1.0000) rotate(0.01deg);">Record Schedule</span>
<span class="t" style="font-size:11.41px;color:#ffffff;-webkit-text-stroke:0.45px #ffffff;transform:translate(277.18px,161.37px) scale(0.8969,1.0000) rotate(0.01deg);">05</span>
<span class="t" style="font-size:19.77px;color:#ffffff;-webkit-text-stroke:0.5px #ffffff;transform:translate(306.32px,157.60px) scale(0.9635,1.0000) rotate(0.01deg);">Elite XPro PoE</span>
<span class="t" style="font-size:19.55px;color:#cccccc;-webkit-text-stroke:0.45px #cccccc;transform:translate(407.89px,294.60px) scale(1.0259,1.0000) rotate(0.01deg);">Alarm</span>
<span class="t" style="font-size:19.55px;color:#b2b2b2;-webkit-text-stroke:0.45px #b2b2b2;transform:translate(496.00px,294.60px) scale(1.0411,1.0000) rotate(0.01deg);">Timer</span>
<span class="t" style="font-size:14.53px;color:#0f6eff;-webkit-text-stroke:0.6px #0f6eff;transform:translate(1270.05px,293.50px) scale(0.9820,1.0000) rotate(0.01deg);">Add Type</span>
<span class="t" style="font-size:14.68px;color:#c8c8c8;-webkit-text-stroke:0.4px #c8c8c8;transform:translate(435.58px,345.92px) scale(1.0220,1.0000) rotate(0.01deg);">Any Motion</span>
<span class="t" style="font-size:14.68px;color:#c8c8c8;-webkit-text-stroke:0.4px #c8c8c8;transform:translate(563.54px,345.92px) scale(1.0157,1.0000) rotate(0.01deg);">Person</span>
<span class="t" style="font-size:14.68px;color:#c8c8c8;-webkit-text-stroke:0.4px #c8c8c8;transform:translate(664.37px,344.17px) scale(1.0431,1.0000) rotate(0.01deg);">Motor Vehicle</span>
<span class="t" style="font-size:14.68px;color:#c8c8c8;-webkit-text-stroke:0.4px #c8c8c8;transform:translate(810.74px,344.17px) scale(1.0319,1.0000) rotate(0.01deg);">Animal</span>
<span class="t" style="font-size:14.68px;color:#c8c8c8;-webkit-text-stroke:0.4px #c8c8c8;transform:translate(908.83px,345.05px) scale(1.0171,1.0000) rotate(0.01deg);">Line Crossing Alert</span>
<span class="t" style="font-size:14.68px;color:#c8c8c8;-webkit-text-stroke:0.4px #c8c8c8;transform:translate(1110.15px,345.05px) scale(1.0147,1.0000) rotate(0.01deg);">Zone Intrusion Alert</span>
<span class="t" style="font-size:14.68px;color:#c8c8c8;-webkit-text-stroke:0.4px #c8c8c8;transform:translate(435.37px,380.79px) scale(1.0225,1.0000) rotate(0.01deg);">Zone Loitering Alert</span>
<span class="t" style="font-size:14.10px;color:#c8c8c8;-webkit-text-stroke:0.4px #c8c8c8;transform:translate(508.00px,413.31px) scale(1.0021,1.0000) rotate(0.01deg);">0</span>
<span class="t" style="font-size:14.10px;color:#c8c8c8;-webkit-text-stroke:0.4px #c8c8c8;transform:translate(539.78px,413.28px) scale(1.0021,1.0000) rotate(0.01deg);">1</span>
<span class="t" style="font-size:14.10px;color:#c8c8c8;-webkit-text-stroke:0.4px #c8c8c8;transform:translate(571.56px,413.35px) scale(1.0021,1.0000) rotate(0.01deg);">2</span>
<span class="t" style="font-size:14.10px;color:#c8c8c8;-webkit-text-stroke:0.4px #c8c8c8;transform:translate(603.34px,413.29px) scale(1.0021,1.0000) rotate(0.01deg);">3</span>
<span class="t" style="font-size:14.10px;color:#c8c8c8;-webkit-text-stroke:0.4px #c8c8c8;transform:translate(635.12px,413.32px) scale(1.0021,1.0000) rotate(0.01deg);">4</span>
<span class="t" style="font-size:14.10px;color:#c8c8c8;-webkit-text-stroke:0.4px #c8c8c8;transform:translate(666.90px,413.27px) scale(1.0021,1.0000) rotate(0.01deg);">5</span>
<span class="t" style="font-size:14.10px;color:#c8c8c8;-webkit-text-stroke:0.4px #c8c8c8;transform:translate(698.68px,413.34px) scale(1.0021,1.0000) rotate(0.01deg);">6</span>
<span class="t" style="font-size:14.10px;color:#c8c8c8;-webkit-text-stroke:0.4px #c8c8c8;transform:translate(730.46px,413.37px) scale(1.0021,1.0000) rotate(0.01deg);">7</span>
<span class="t" style="font-size:14.10px;color:#c8c8c8;-webkit-text-stroke:0.4px #c8c8c8;transform:translate(762.24px,413.34px) scale(1.0021,1.0000) rotate(0.01deg);">8</span>
<span class="t" style="font-size:14.10px;color:#c8c8c8;-webkit-text-stroke:0.4px #c8c8c8;transform:translate(794.02px,413.31px) scale(1.0021,1.0000) rotate(0.01deg);">9</span>
<span class="t" style="font-size:14.10px;color:#c8c8c8;-webkit-text-stroke:0.4px #c8c8c8;transform:translate(825.80px,413.27px) scale(1.0021,1.0000) rotate(0.01deg);">10</span>
<span class="t" style="font-size:14.10px;color:#c8c8c8;-webkit-text-stroke:0.4px #c8c8c8;transform:translate(857.58px,413.35px) scale(1.0737,1.0000) rotate(0.01deg);">11</span>
<span class="t" style="font-size:14.10px;color:#c8c8c8;-webkit-text-stroke:0.4px #c8c8c8;transform:translate(889.36px,413.28px) scale(1.0021,1.0000) rotate(0.01deg);">12</span>
<span class="t" style="font-size:14.10px;color:#c8c8c8;-webkit-text-stroke:0.4px #c8c8c8;transform:translate(921.14px,413.32px) scale(1.0021,1.0000) rotate(0.01deg);">13</span>
<span class="t" style="font-size:14.10px;color:#c8c8c8;-webkit-text-stroke:0.4px #c8c8c8;transform:translate(952.92px,413.27px) scale(1.0021,1.0000) rotate(0.01deg);">14</span>
<span class="t" style="font-size:14.10px;color:#c8c8c8;-webkit-text-stroke:0.4px #c8c8c8;transform:translate(984.70px,413.34px) scale(1.0021,1.0000) rotate(0.01deg);">15</span>
<span class="t" style="font-size:14.10px;color:#c8c8c8;-webkit-text-stroke:0.4px #c8c8c8;transform:translate(1016.48px,413.37px) scale(1.0021,1.0000) rotate(0.01deg);">16</span>
<span class="t" style="font-size:14.10px;color:#c8c8c8;-webkit-text-stroke:0.4px #c8c8c8;transform:translate(1048.26px,413.34px) scale(1.0021,1.0000) rotate(0.01deg);">17</span>
<span class="t" style="font-size:14.10px;color:#c8c8c8;-webkit-text-stroke:0.4px #c8c8c8;transform:translate(1080.04px,413.31px) scale(1.0021,1.0000) rotate(0.01deg);">18</span>
<span class="t" style="font-size:14.10px;color:#c8c8c8;-webkit-text-stroke:0.4px #c8c8c8;transform:translate(1111.82px,413.28px) scale(1.0021,1.0000) rotate(0.01deg);">19</span>
<span class="t" style="font-size:14.10px;color:#c8c8c8;-webkit-text-stroke:0.4px #c8c8c8;transform:translate(1143.60px,413.35px) scale(1.0021,1.0000) rotate(0.01deg);">20</span>
<span class="t" style="font-size:14.10px;color:#c8c8c8;-webkit-text-stroke:0.4px #c8c8c8;transform:translate(1175.38px,413.35px) scale(1.0021,1.0000) rotate(0.01deg);">21</span>
<span class="t" style="font-size:14.10px;color:#c8c8c8;-webkit-text-stroke:0.4px #c8c8c8;transform:translate(1207.16px,413.32px) scale(1.0021,1.0000) rotate(0.01deg);">22</span>
<span class="t" style="font-size:14.10px;color:#c8c8c8;-webkit-text-stroke:0.4px #c8c8c8;transform:translate(1238.94px,413.32px) scale(1.0021,1.0000) rotate(0.01deg);">23</span>
<span class="t" style="font-size:14.83px;color:#c8c8c8;-webkit-text-stroke:0.4px #c8c8c8;transform:translate(443.10px,453.08px) scale(0.9768,1.0000) rotate(0.01deg);">Sun</span>
<span class="t" style="font-size:14.83px;color:#c8c8c8;-webkit-text-stroke:0.4px #c8c8c8;transform:translate(442.62px,483.96px) scale(1.0639,1.0000) rotate(0.01deg);">Mon</span>
<span class="t" style="font-size:14.83px;color:#c8c8c8;-webkit-text-stroke:0.4px #c8c8c8;transform:translate(443.39px,514.86px) scale(0.9687,1.0000) rotate(0.01deg);">Tue</span>
<span class="t" style="font-size:14.83px;color:#c8c8c8;-webkit-text-stroke:0.4px #c8c8c8;transform:translate(443.52px,545.74px) scale(0.9907,1.0000) rotate(0.01deg);">Wed</span>
<span class="t" style="font-size:14.83px;color:#c8c8c8;-webkit-text-stroke:0.4px #c8c8c8;transform:translate(443.54px,576.62px) scale(1.0139,1.0000) rotate(0.01deg);">Thu</span>
<span class="t" style="font-size:14.83px;color:#c8c8c8;-webkit-text-stroke:0.4px #c8c8c8;transform:translate(442.69px,607.53px) scale(1.0351,1.0000) rotate(0.01deg);">Fri</span>
<span class="t" style="font-size:14.83px;color:#c8c8c8;-webkit-text-stroke:0.4px #c8c8c8;transform:translate(442.87px,638.43px) scale(1.0266,1.0000) rotate(0.01deg);">Sat</span>
<span class="t" style="font-size:14.53px;color:#c8c8c8;-webkit-text-stroke:0.4px #c8c8c8;transform:translate(535.28px,700.26px) scale(1.0097,1.0000) rotate(0.01deg);">Enable</span>
<span class="t" style="font-size:14.53px;color:#c8c8c8;-webkit-text-stroke:0.4px #c8c8c8;transform:translate(685.28px,700.24px) scale(1.0446,1.0000) rotate(0.01deg);">Disable</span>
<span class="t" style="font-size:14.53px;color:#c4c4c4;-webkit-text-stroke:0.4px #c4c4c4;transform:translate(314.60px,825.70px) scale(0.9994,1.0000) rotate(0.01deg);">Apply to Other Cameras</span>
</body>
</html>
